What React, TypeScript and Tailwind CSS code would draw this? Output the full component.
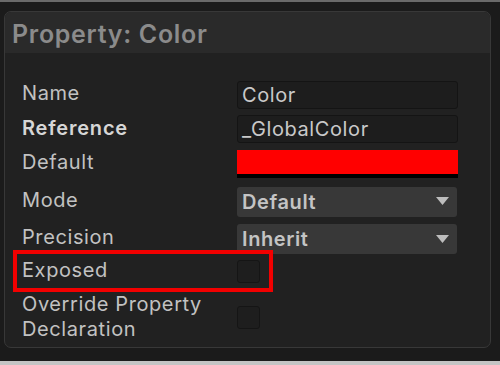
import React from "react";

const font = { fontFamily: "Inter, 'Noto Sans', sans-serif" };

function TextField({ value }: { value: string }) {
  return (
    <div className="flex h-[28px] w-[221px] items-center rounded-[3px] border border-[#141414] bg-[#1d1d1d] px-[4px] text-[20px] leading-none tracking-[0.6px] text-[#c9c9c9]">
      {value}
    </div>
  );
}

function Dropdown({ value }: { value: string }) {
  return (
    <div className="flex h-[30px] w-[220px] items-center justify-between rounded-[3px] bg-[#383838] pl-[5px] pr-[8px] text-[20px] font-semibold leading-none tracking-[0.6px] text-[#c4c4c4]">
      <span>{value}</span>
      <svg width="13" height="9" viewBox="0 0 13 9">
        <path d="M0 0 H13 L6.5 8 Z" fill="#bdbdbd" />
      </svg>
    </div>
  );
}

function Checkbox() {
  return <div className="h-[23px] w-[23px] rounded-[3px] border border-[#151515] bg-[#1e1e1e]" />;
}

export default function App() {
  return (
    <div style={font} className="relative flex h-[365px] w-[500px] flex-col overflow-hidden bg-[#1b1b1b]">
      <div className="h-[2px] bg-[#6a6a6a]" />
      <div className="ml-[4px] mt-[9px] flex h-[337px] w-[487px] flex-col rounded-[7px] border border-[#383838] bg-[#212121]">
        {/* Header */}
        <div className="flex h-[41px] items-center rounded-t-[6px] bg-[#2a2a2a] pl-[7px] pt-[4px] text-[25px] font-semibold tracking-[0.7px] text-[#8b8b8b]">
          Property: Color
        </div>

        {/* Rows */}
        <div className="flex flex-col pt-[25px] pl-[17px] text-[20px] tracking-[0.6px] text-[#c2c2c2]">
          <div className="flex h-[34px] items-center">
            <span className="w-[215px] -mt-[4px]">Name</span>
            <TextField value="Color" />
          </div>
          <div className="flex h-[34px] items-center">
            <span className="w-[215px] -mt-[2px] font-semibold tracking-[0.8px] text-[#d6d6d6]">Reference</span>
            <TextField value="_GlobalColor" />
          </div>
          <div className="flex h-[36px] items-center">
            <span className="w-[215px] -mt-[4px]">Default</span>
            <div className="flex h-[28px] w-[221px] flex-col">
              <div className="h-[24px] bg-[#ff0000]" />
              <div className="h-[4px] bg-[#000000]" />
            </div>
          </div>
          <div className="flex h-[39px] items-center">
            <span className="w-[215px] -mt-[4px]">Mode</span>
            <Dropdown value="Default" />
          </div>
          <div className="flex h-[36px] items-center">
            <span className="w-[215px] -mt-[4px]">Precision</span>
            <Dropdown value="Inherit" />
          </div>
          <div className="flex h-[28px] items-center">
            <span className="w-[215px] -mt-[2px]">Exposed</span>
            <Checkbox />
          </div>
          <div className="flex items-start pt-[7px]">
            <span className="w-[215px] leading-[25px]">
              Override Property
              <br />
              Declaration
            </span>
            <div className="pt-[14px]">
              <Checkbox />
            </div>
          </div>
        </div>
      </div>
      <div className="mt-auto h-[4px] bg-[#c4c4c4]" />

      {/* annotation highlight */}
      <div className="absolute left-[13px] top-[250px] h-[42px] w-[260px] border-[4px] border-[#f20000]" />
    </div>
  );
}
